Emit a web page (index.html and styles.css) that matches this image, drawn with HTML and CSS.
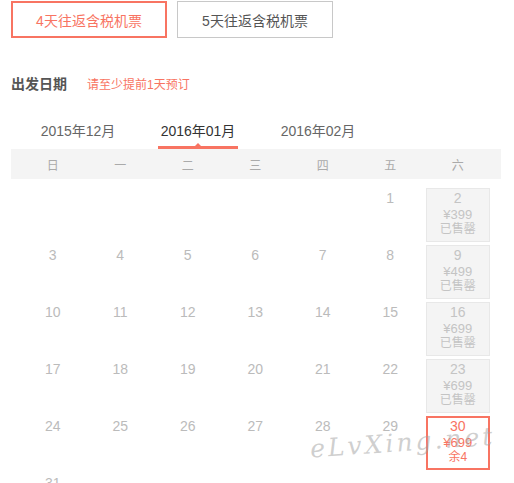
FILE: index.html
```html
<!DOCTYPE html>
<html>
<head>
<meta charset="utf-8">
<link rel="stylesheet" href="styles.css">
</head>
<body>
<div class="page">
  <div class="options">
    <div class="opt active">4天往返含税机票</div>
    <div class="opt">5天往返含税机票</div>
  </div>
  <div class="date-title">
    <span class="label">出发日期</span>
    <span class="hint">请至少提前1天预订</span>
  </div>
  <div class="tabs">
    <div class="tab">2015年12月</div>
    <div class="tab current">2016年01月</div>
    <div class="tab">2016年02月</div>
  </div>
  <div class="week">
    <span>日</span><span>一</span><span>二</span><span>三</span><span>四</span><span>五</span><span>六</span>
  </div>
  <div class="grid">
    <div class="cell"></div><div class="cell"></div><div class="cell"></div><div class="cell"></div><div class="cell"></div>
    <div class="cell"><div class="num">1</div></div>
    <div class="cell sold"><div class="num">2</div><div class="price">¥399</div><div class="st">已售罄</div></div>

    <div class="cell"><div class="num">3</div></div>
    <div class="cell"><div class="num">4</div></div>
    <div class="cell"><div class="num">5</div></div>
    <div class="cell"><div class="num">6</div></div>
    <div class="cell"><div class="num">7</div></div>
    <div class="cell"><div class="num">8</div></div>
    <div class="cell sold"><div class="num">9</div><div class="price">¥499</div><div class="st">已售罄</div></div>

    <div class="cell"><div class="num">10</div></div>
    <div class="cell"><div class="num">11</div></div>
    <div class="cell"><div class="num">12</div></div>
    <div class="cell"><div class="num">13</div></div>
    <div class="cell"><div class="num">14</div></div>
    <div class="cell"><div class="num">15</div></div>
    <div class="cell sold"><div class="num">16</div><div class="price">¥699</div><div class="st">已售罄</div></div>

    <div class="cell"><div class="num">17</div></div>
    <div class="cell"><div class="num">18</div></div>
    <div class="cell"><div class="num">19</div></div>
    <div class="cell"><div class="num">20</div></div>
    <div class="cell"><div class="num">21</div></div>
    <div class="cell"><div class="num">22</div></div>
    <div class="cell sold"><div class="num">23</div><div class="price">¥699</div><div class="st">已售罄</div></div>

    <div class="cell"><div class="num">24</div></div>
    <div class="cell"><div class="num">25</div></div>
    <div class="cell"><div class="num">26</div></div>
    <div class="cell"><div class="num">27</div></div>
    <div class="cell"><div class="num">28</div></div>
    <div class="cell"><div class="num">29</div></div>
    <div class="cell avail"><div class="num">30</div><div class="price">¥699</div><div class="st">余4</div></div>

    <div class="cell"><div class="num">31</div></div>
  </div>
  <div class="watermark">eLvXing.net</div>
</div>
</body>
</html>
```
FILE: styles.css
```css
html, body {
  margin: 0;
  padding: 0;
  background: #fff;
}
body {
  font-family: "Liberation Sans", "Noto Sans CJK SC", sans-serif;
  color: #333;
}
.page {
  position: relative;
  padding: 1px 13px 0 11px;
  height: 482px;
  overflow: hidden;
}
.options {
  display: flex;
  gap: 10px;
}
.opt {
  box-sizing: border-box;
  width: 156px;
  height: 37px;
  border: 1px solid #c8c8c8;
  display: flex;
  align-items: center;
  justify-content: center;
  font-size: 14px;
  color: #555;
}
.opt.active {
  border: 2px solid #f87462;
  color: #f87462;
}
.date-title {
  display: flex;
  align-items: center;
  margin-top: 35px;
  height: 20px;
}
.label {
  font-size: 14px;
  font-weight: bold;
  color: #555;
}
.hint {
  margin-left: 20px;
  font-size: 12px;
  color: #f87462;
}
.tabs {
  display: flex;
  margin-top: 28px;
  padding-left: 27px;
}
.tab {
  position: relative;
  width: 80px;
  margin-right: 40px;
  text-align: center;
  font-size: 14px;
  color: #666;
  height: 20px;
  line-height: 20px;
  padding-bottom: 5px;
  border-bottom: 3px solid transparent;
}
.tab.current {
  color: #333;
  border-bottom-color: #f87462;
}
.tab.current::after {
  content: "";
  position: absolute;
  left: 50%;
  bottom: 0;
  margin-left: -3px;
  border-left: 3px solid transparent;
  border-right: 3px solid transparent;
  border-bottom: 3px solid #f87462;
}
.week {
  display: grid;
  grid-template-columns: repeat(7, 67.5px);
  background: #f4f4f4;
  height: 30px;
  align-items: center;
  padding-left: 8px;
  font-size: 12px;
  color: #aaa;
  font-family: "Noto Sans CJK SC", sans-serif;
}
.week span {
  text-align: center;
}
.grid {
  display: grid;
  grid-template-columns: repeat(7, 67.5px);
  grid-auto-rows: 54px;
  row-gap: 3px;
  padding-left: 8px;
  margin-top: 9px;
}
.cell {
  box-sizing: border-box;
  width: 64px;
  justify-self: center;
  border: 1px solid transparent;
  text-align: center;
  color: #bbb;
}
.num {
  font-size: 14px;
  line-height: 17px;
  margin-top: 1px;
}
.price {
  font-size: 13px;
  line-height: 15px;
}
.st {
  font-size: 12px;
  line-height: 15px;
}
.cell.sold {
  background: #f4f4f4;
  border-color: #e8e8e8;
  color: #c4c4c4;
}
.cell.avail {
  border: 2px solid #f87462;
  color: #f87462;
}
.cell.avail .num {
  margin-top: 0;
}
.watermark {
  position: absolute;
  left: 310px;
  top: 428px;
  font-family: "DejaVu Serif", serif;
  font-style: italic;
  font-size: 25px;
  letter-spacing: 3px;
  color: rgba(160, 160, 160, 0.5);
  transform: rotate(-4deg);
  white-space: nowrap;
}
```
